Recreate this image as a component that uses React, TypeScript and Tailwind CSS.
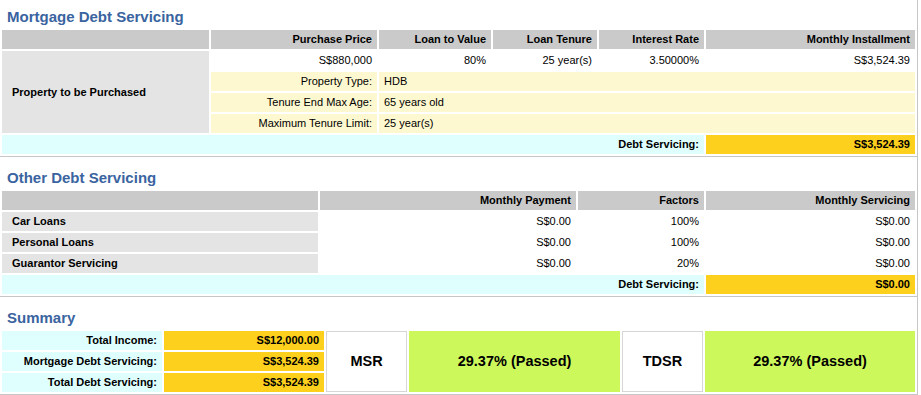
import type { ReactNode } from "react"

const mortgageHead = ["Purchase Price", "Loan to Value", "Loan Tenure", "Interest Rate", "Monthly Installment"]
const mortgageValues = ["S$880,000", "80%", "25 year(s)", "3.50000%", "S$3,524.39"]
const propertyDetails = [
  ["Property Type:", "HDB"],
  ["Tenure End Max Age:", "65 years old"],
  ["Maximum Tenure Limit:", "25 year(s)"],
]

const otherDebts = [
  { name: "Car Loans", payment: "S$0.00", factor: "100%", servicing: "S$0.00" },
  { name: "Personal Loans", payment: "S$0.00", factor: "100%", servicing: "S$0.00" },
  { name: "Guarantor Servicing", payment: "S$0.00", factor: "20%", servicing: "S$0.00" },
]

const summaryRows = [
  ["Total Income:", "S$12,000.00"],
  ["Mortgage Debt Servicing:", "S$3,524.39"],
  ["Total Debt Servicing:", "S$3,524.39"],
]

function SectionTitle({ children }: { children: ReactNode }) {
  return <h2 className="mb-[3px] h-[17px] pl-[7px] text-[15px] leading-[17px] font-bold text-[#3a64a0]">{children}</h2>
}

function Cell({ className = "", children }: { className?: string; children?: ReactNode }) {
  return <div className={`flex items-center px-[5px] ${className}`}>{children}</div>
}

export default function App() {
  return (
    <div className="w-[918px] border-r border-[#c6c6c6] bg-white text-[11px] text-black font-['Liberation_Sans',Arial,sans-serif]">
      {/* mortgage */}
      <section className="border-b border-[#c6c6c6] pt-[8px]">
        <SectionTitle>Mortgage Debt Servicing</SectionTitle>
        <div className="grid grid-cols-[207px_166px_112px_104px_105px_1fr] auto-rows-[19px] gap-[2px] p-[2px]">
          <Cell className="bg-[#cacaca]" />
          {mortgageHead.map((h) => (
            <Cell key={h} className="justify-end bg-[#cacaca] font-bold">
              {h}
            </Cell>
          ))}
          <Cell className="row-span-4 bg-[#e4e4e4] pl-[10px] font-bold">Property to be Purchased</Cell>
          {mortgageValues.map((v, i) => (
            <Cell key={i} className="justify-end">
              {v}
            </Cell>
          ))}
          {propertyDetails.map(([label, value]) => (
            <div key={label} className="col-span-5 grid grid-cols-subgrid">
              <Cell className="justify-end bg-[#fef8d0]">{label}</Cell>
              <Cell className="col-span-4 bg-[#fef8d0]">{value}</Cell>
            </div>
          ))}
          <Cell className="col-span-5 justify-end bg-[#dfffff] font-bold">Debt Servicing:</Cell>
          <Cell className="justify-end bg-[#fcd01c] font-bold">S$3,524.39</Cell>
        </div>
      </section>

      {/* other debts */}
      <section className="border-b border-[#c6c6c6] pt-[12px]">
        <SectionTitle>Other Debt Servicing</SectionTitle>
        <div className="grid grid-cols-[316px_256px_126px_1fr] auto-rows-[19px] gap-[2px] p-[2px]">
          <Cell className="bg-[#cacaca]" />
          <Cell className="justify-end bg-[#cacaca] font-bold">Monthly Payment</Cell>
          <Cell className="justify-end bg-[#cacaca] font-bold">Factors</Cell>
          <Cell className="justify-end bg-[#cacaca] font-bold">Monthly Servicing</Cell>
          {otherDebts.map((d) => (
            <div key={d.name} className="col-span-4 grid grid-cols-subgrid">
              <Cell className="bg-[#e4e4e4] pl-[10px] font-bold">{d.name}</Cell>
              <Cell className="justify-end">{d.payment}</Cell>
              <Cell className="justify-end">{d.factor}</Cell>
              <Cell className="justify-end">{d.servicing}</Cell>
            </div>
          ))}
          <Cell className="col-span-3 justify-end bg-[#dfffff] font-bold">Debt Servicing:</Cell>
          <Cell className="justify-end bg-[#fcd01c] font-bold">S$0.00</Cell>
        </div>
      </section>

      {/* summary */}
      <section className="border-b border-[#c6c6c6] pt-[12px]">
        <SectionTitle>Summary</SectionTitle>
        <div className="grid grid-cols-[160px_160px_81px_211px_81px_1fr] grid-rows-[19px_19px_19px] gap-[2px] p-[2px] font-bold">
          {summaryRows.map(([label, value], i) => (
            <div key={label} className={`col-span-2 col-start-1 grid grid-cols-subgrid ${["row-start-1", "row-start-2", "row-start-3"][i]}`}>
              <Cell className="justify-end bg-[#dfffff]">{label}</Cell>
              <Cell className="justify-end bg-[#fcd01c]">{value}</Cell>
            </div>
          ))}
          <div className="col-start-3 row-span-3 row-start-1 flex items-center justify-center border border-[#d6d6d6] text-[14.5px]">MSR</div>
          <div className="col-start-4 row-span-3 row-start-1 flex items-center justify-center bg-[#cdf85c] text-[14.5px]">29.37% (Passed)</div>
          <div className="col-start-5 row-span-3 row-start-1 flex items-center justify-center border border-[#d6d6d6] text-[14.5px]">TDSR</div>
          <div className="col-start-6 row-span-3 row-start-1 flex items-center justify-center bg-[#cdf85c] text-[14.5px]">29.37% (Passed)</div>
        </div>
      </section>
    </div>
  )
}
